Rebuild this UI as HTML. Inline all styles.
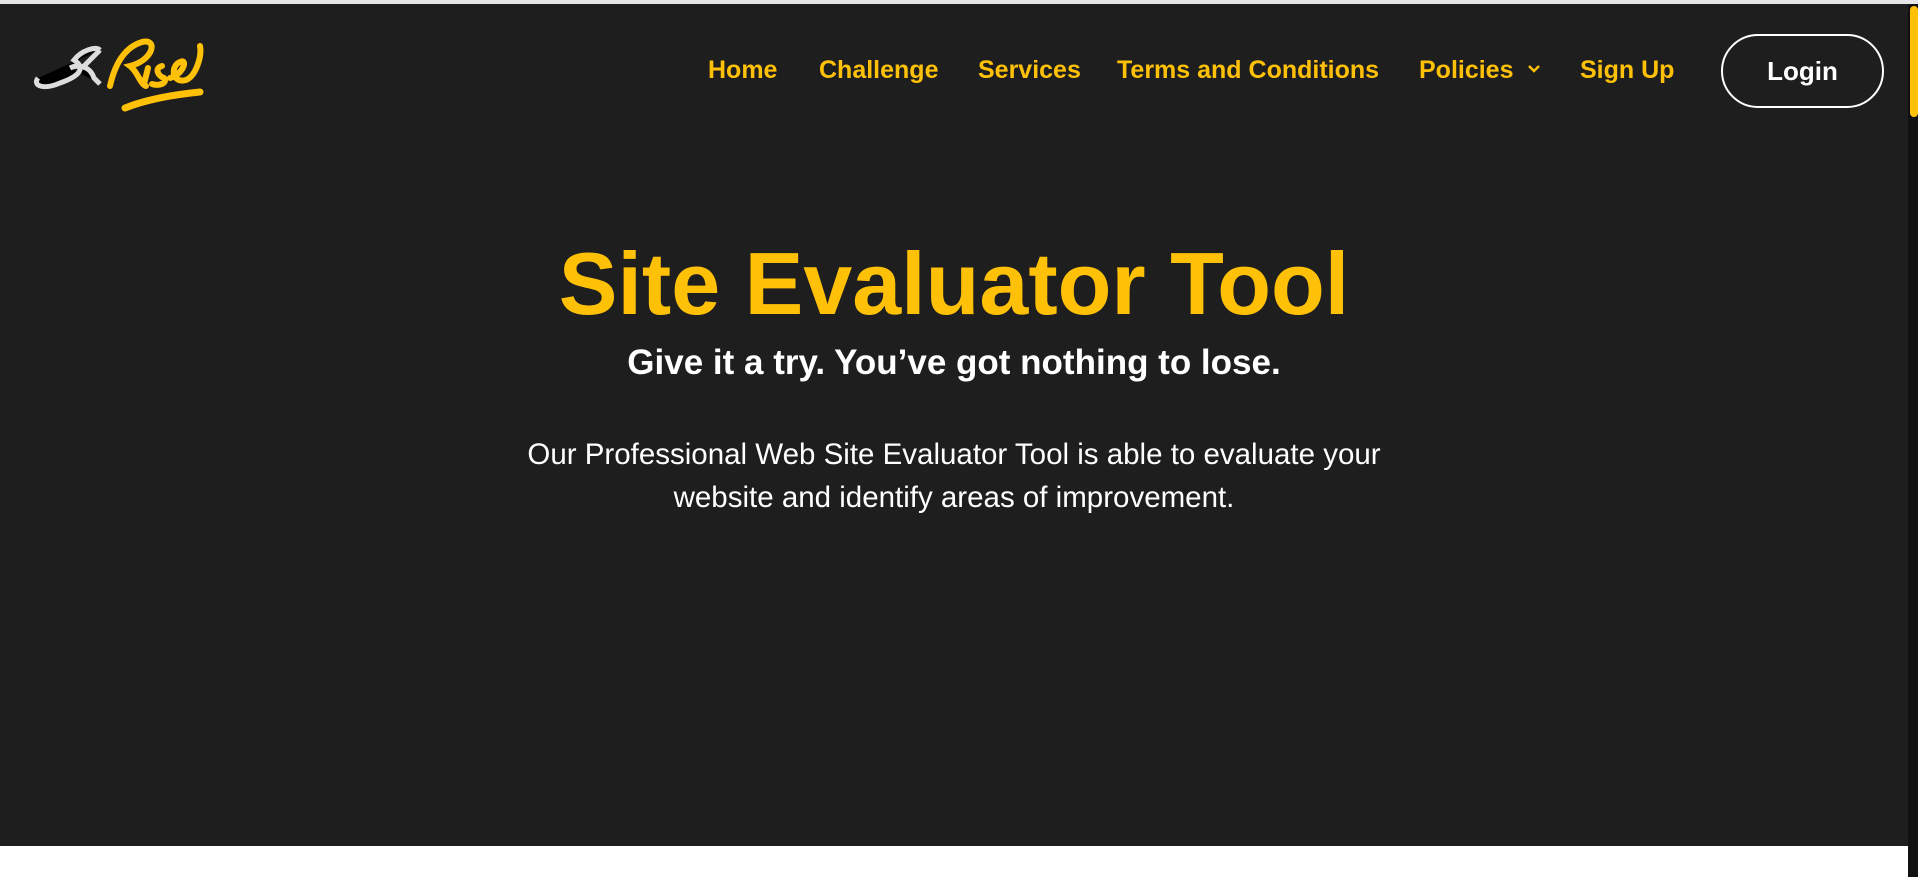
<!DOCTYPE html>
<html><head><meta charset="utf-8"><style>
*{margin:0;padding:0;box-sizing:border-box}
body{width:1918px;height:877px;background:#fff;font-family:"Liberation Sans",sans-serif;position:relative;overflow:hidden}
.top{position:absolute;left:0;top:0;width:1918px;height:4px;background:#e6e6e6}
.hero{position:absolute;left:0;top:4px;width:1908px;height:842px;background:#1e1e1e}
.sb{position:absolute;left:1908px;top:4px;width:10px;height:873px;background:#111}
.thumb{position:absolute;left:1910px;top:6px;width:8px;height:111px;background:#ffc107;border-radius:4px}
.nav a{position:absolute;top:55px;color:#ffc107;font-weight:bold;font-size:25px;text-decoration:none;white-space:nowrap;line-height:30px}
.login{position:absolute;left:1721px;top:34px;width:163px;height:74px;border:2px solid #fff;border-radius:37px;color:#fff;font-weight:bold;font-size:26px;text-align:center;line-height:70px}
.c{position:absolute;left:0;width:1908px;text-align:center}
h1{top:234px;color:#ffc107;font-size:88px;font-weight:bold;line-height:100px}
h2{top:342px;color:#fff;font-size:35px;font-weight:bold;line-height:42px}
p.c{top:433px;color:#fff;font-size:29.5px;line-height:43px}
</style></head><body>
<div class="top"></div>
<div class="hero"></div>
<div class="sb"></div><div class="thumb"></div>
<svg style="position:absolute;left:30px;top:28px" width="180" height="90" viewBox="0 0 180 90">
<path d="M8 50 C2 58 14 62 30 55 C50 48 56 40 44 32 C52 22 66 18 70 22 M40 40 C48 36 60 38 64 50 L70 56 M52 40 L70 22" stroke="#ddd" stroke-width="5" fill="#000" />
<path d="M80 58 C84 40 92 20 112 14 C128 10 124 32 100 38 C108 44 110 56 116 58 M118 40 L114 56 M132 38 C124 40 128 48 134 50 C138 56 128 58 122 56 M140 50 C154 46 158 30 150 34 C140 38 142 56 156 52 C166 48 172 28 170 18" stroke="#ffc107" stroke-width="6" fill="none" stroke-linecap="round"/>
<path d="M95 80 C120 70 150 66 170 64" stroke="#ffc107" stroke-width="7" fill="none" stroke-linecap="round"/>
</svg>
<div class="nav">
<a style="left:708px">Home</a>
<a style="left:819px">Challenge</a>
<a style="left:978px">Services</a>
<a style="left:1117px">Terms and Conditions</a>
<a style="left:1419px">Policies</a>
<svg style="position:absolute;left:1527px;top:64px" width="14" height="10" viewBox="0 0 14 10"><path d="M2 2 L7 7 L12 2" stroke="#ffc107" stroke-width="2.5" fill="none"/></svg>
<a style="left:1580px">Sign Up</a>
</div>
<div class="login">Login</div>
<h1 class="c">Site Evaluator Tool</h1>
<h2 class="c">Give it a try. You’ve got nothing to lose.</h2>
<p class="c">Our Professional Web Site Evaluator Tool is able to evaluate your<br>website and identify areas of improvement.</p>
</body></html>
